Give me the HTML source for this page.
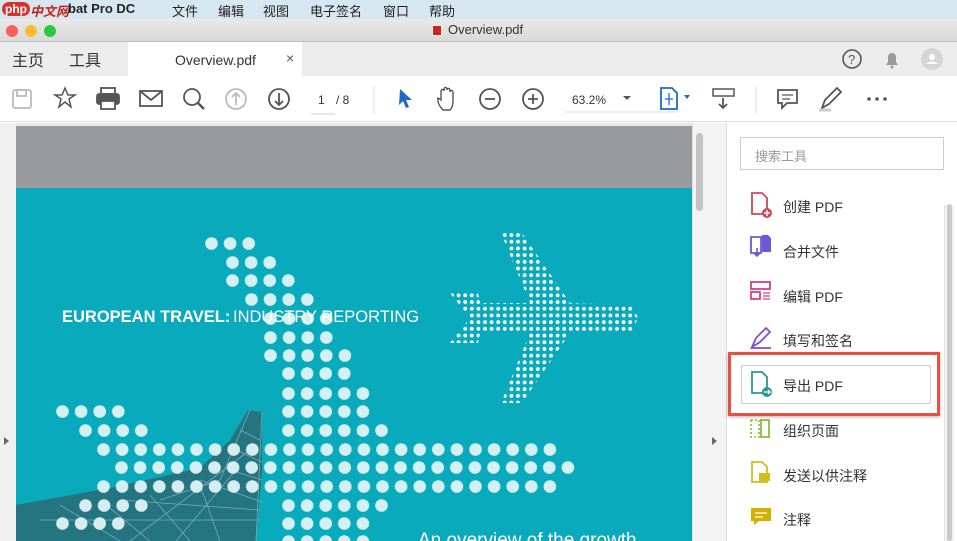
<!DOCTYPE html>
<html><head><meta charset="utf-8"><style>
*{margin:0;padding:0;box-sizing:border-box}
body{width:957px;height:541px;overflow:hidden;position:relative;background:#fff;font-family:"Liberation Sans","Noto Sans CJK SC",sans-serif;color:#333}
.abs{position:absolute}
.menu{top:0;left:0;width:957px;height:19px;background:#d6e7f1;font-size:13px;color:#222}
.menu span{position:absolute;top:1px}
.title{top:19px;left:0;width:957px;height:23px;background:linear-gradient(#e9e9e9,#d9d9d9);border-bottom:1px solid #bdbdbd}
.tl{width:12px;height:12px;border-radius:50%;top:6px}
.tabs{top:42px;left:0;width:957px;height:34px;background:#ececec}
.tool{top:76px;left:0;width:957px;height:46px;background:#fff;border-bottom:1px solid #ddd}
.panel{top:123px;left:726px;width:231px;height:418px;background:#fff;border-left:1px solid #ddd}
.item{position:absolute;left:783px;font-size:14px;color:#333}
</style></head><body>
<div class="abs menu">
<span style="left:2px;font-weight:bold;color:#fff;background:#d9312b;border-radius:8px;padding:0 3px;font-size:12px;top:2px">php</span>
<span style="left:30px;font-weight:bold;font-style:italic;color:#c0241e">中文网</span>
<span style="left:68px;font-weight:bold">bat Pro DC</span>
<span style="left:172px">文件</span><span style="left:218px">编辑</span><span style="left:263px">视图</span><span style="left:310px">电子签名</span><span style="left:383px">窗口</span><span style="left:429px">帮助</span>
</div>
<div class="abs title">
<div class="abs tl" style="left:6px;background:#fc5f57"></div>
<div class="abs tl" style="left:25px;background:#fdbc2e"></div>
<div class="abs tl" style="left:44px;background:#28c840"></div>
<div class="abs" style="left:432px;top:6px;width:10px;height:11px;background:#c7281f;border:1px solid #eee"></div>
<div class="abs" style="left:448px;top:3px;font-size:13px;color:#333">Overview.pdf</div>
</div>
<div class="abs tabs">
<div class="abs" style="left:12px;top:5px;font-size:16px">主页</div>
<div class="abs" style="left:69px;top:5px;font-size:16px">工具</div>
<div class="abs" style="left:128px;top:0;width:174px;height:34px;background:#fff"></div>
<div class="abs" style="left:175px;top:10px;font-size:14px">Overview.pdf</div>
<div class="abs" style="left:286px;top:8px;font-size:14px;color:#555">×</div>
<svg class="abs" style="left:838px;top:5px" width="120" height="26">
<circle cx="14" cy="12" r="9" fill="none" stroke="#555" stroke-width="1.6"/><text x="10" y="17" font-size="13" fill="#555" font-family="Liberation Sans">?</text>
<path d="M48 18h12l-2-3v-5a4 4 0 0 0-8 0v5z" fill="#999"/><circle cx="54" cy="20" r="1.5" fill="#999"/>
<circle cx="94" cy="12" r="11" fill="#d5d5d5"/><circle cx="94" cy="10" r="3" fill="#fff"/><path d="M88 17q6-5 12 0z" fill="#fff"/>
</svg>
</div>
<div class="abs tool">
<svg width="957" height="46" fill="none" stroke="#555" stroke-width="1.8">
<rect x="13" y="14" width="18" height="18" rx="2" stroke="#bbb"/><rect x="17" y="14" width="9" height="6" stroke="#bbb"/>
<path d="M65 12l3 7h7l-6 4 2 8-6-5-6 5 2-8-6-4h7z" stroke-width="1.5"/>
<rect x="97" y="18" width="22" height="10" rx="2" fill="#555"/><rect x="101" y="12" width="14" height="6"/><rect x="101" y="25" width="14" height="8" fill="#fff"/>
<rect x="140" y="15" width="22" height="15"/><path d="M140 15l11 9 11-9"/>
<circle cx="192" cy="21" r="8"/><path d="M198 27l6 6" stroke-width="2.5"/>
<circle cx="236" cy="23" r="10" stroke="#bbb"/><path d="M236 29v-12m-4 4l4-4 4 4" stroke="#bbb"/>
<circle cx="279" cy="23" r="10"/><path d="M279 17v12m-4-4l4 4 4-4"/>
<path d="M311 38h24" stroke="#ccc" stroke-width="1"/>
<path d="M374 10v28" stroke="#ddd" stroke-width="1"/>
<path d="M400 13l12 11h-6l3 7-3 1-3-7-4 4z" fill="#1b6ac9" stroke="none"/>
<path d="M443 34q-6-6-5-12l3 2v-9a1.5 1.5 0 0 1 3 0v-2a1.5 1.5 0 0 1 3 0v1a1.5 1.5 0 0 1 3 0v2a1.5 1.5 0 0 1 3 0v9q0 6-3 9z" stroke-width="1.4"/>
<circle cx="490" cy="23" r="10"/><path d="M485 23h10"/>
<circle cx="533" cy="23" r="10"/><path d="M528 23h10M533 18v10"/>
<path d="M565 36h112" stroke="#ddd" stroke-width="1"/><path d="M623 20l4 4 4-4z" fill="#555" stroke="none"/>
<path d="M661 12h11l5 5v16h-16z" stroke="#1b6ac9"/><path d="M669 17v12m-4-6h8" stroke="#1b6ac9" stroke-width="1.3"/><path d="M684 19l3 4 3-4z" fill="#1b6ac9" stroke="none"/>
<rect x="713" y="13" width="21" height="7" stroke-width="1.5"/><path d="M723 22v10m-4-4l4 4 4-4"/>
<path d="M756 10v28" stroke="#ddd" stroke-width="1"/>
<path d="M778 14h19v13h-10l-5 5v-5h-4z"/><path d="M782 19h11M782 23h8" stroke-width="1.2"/>
<path d="M822 32l3-8 12-12 4 4-12 12z"/><path d="M819 34h12" stroke="#ccc" stroke-width="3"/>
<circle cx="869" cy="23" r="1.8" fill="#555" stroke="none"/><circle cx="877" cy="23" r="1.8" fill="#555" stroke="none"/><circle cx="885" cy="23" r="1.8" fill="#555" stroke="none"/>
</svg>
<div class="abs" style="left:318px;top:17px;font-size:12px">1</div>
<div class="abs" style="left:336px;top:17px;font-size:12px">/ 8</div>
<div class="abs" style="left:572px;top:17px;font-size:12px">63.2%</div>
</div>
<div class="abs" style="left:0;top:123px;width:16px;height:418px;background:#f0f0f0"></div>
<div class="abs" style="left:4px;top:437px;border-left:5px solid #666;border-top:4px solid transparent;border-bottom:4px solid transparent"></div>
<div class="abs" style="left:16px;top:123px;width:676px;height:3px;background:#e6e6e6"></div>
<div class="abs" style="left:16px;top:126px;width:676px;height:62px;background:#9a9b9d"></div>
<div class="abs" style="left:16px;top:188px;width:676px;height:353px;background:#0aaabd"></div>
<svg class="abs" style="left:0;top:0" width="692" height="541">
<defs>
<pattern id="p" width="18.6" height="20" patternUnits="userSpaceOnUse"><circle cx="6.5" cy="6.5" r="6.3" fill="#dff4f6"/></pattern>
<pattern id="q" width="6.6" height="6.7" patternUnits="userSpaceOnUse"><circle cx="2" cy="2" r="1.9" fill="#fff"/></pattern>
</defs>
<g fill="#2a6870" opacity="0.8">
<polygon points="16,505 110,488 200,468 230,440 248,410 262,412 262,470 256,541 16,541"/>
</g>
<g stroke="#9cc4c8" stroke-width="0.8" fill="none" opacity="0.7">
<path d="M250 410l-30 70-60 20M262 412l-6 129M240 430l20 10M236 450l26 12M230 470l32 10M200 480l62 22M120 500l140 10M40 520l220 0M60 505l60 36M100 500l50 41M150 495l40 46M200 485l20 56M236 470l-60 71M250 450l-120 91"/>
</g>
<g opacity="0.95">
<g transform="translate(205,237)"><rect width="50.2" height="13" fill="url(#p)"/></g>
<g transform="translate(226,256)"><rect width="50.2" height="13" fill="url(#p)"/></g>
<g transform="translate(226,274)"><rect width="68.8" height="13" fill="url(#p)"/></g>
<g transform="translate(245,293)"><rect width="68.8" height="13" fill="url(#p)"/></g>
<g transform="translate(264,312)"><rect width="68.8" height="13" fill="url(#p)"/></g>
<g transform="translate(264,331)"><rect width="68.8" height="13" fill="url(#p)"/></g>
<g transform="translate(264,349)"><rect width="87.4" height="13" fill="url(#p)"/></g>
<g transform="translate(282,367)"><rect width="68.8" height="13" fill="url(#p)"/></g>
<g transform="translate(282,387)"><rect width="87.4" height="13" fill="url(#p)"/></g>
<g transform="translate(282,405)"><rect width="87.4" height="13" fill="url(#p)"/></g>
<g transform="translate(56,405)"><rect width="68.8" height="13" fill="url(#p)"/></g>
<g transform="translate(282,424)"><rect width="106" height="13" fill="url(#p)"/></g>
<g transform="translate(79,424)"><rect width="68.8" height="13" fill="url(#p)"/></g>
<g transform="translate(97,443)"><rect width="459.4" height="13" fill="url(#p)"/></g>
<g transform="translate(115,461)"><rect width="459.4" height="13" fill="url(#p)"/></g>
<g transform="translate(97,480)"><rect width="459.4" height="13" fill="url(#p)"/></g>
<g transform="translate(282,499)"><rect width="106" height="13" fill="url(#p)"/></g>
<g transform="translate(79,499)"><rect width="68.8" height="13" fill="url(#p)"/></g>
<g transform="translate(282,517)"><rect width="87.4" height="13" fill="url(#p)"/></g>
<g transform="translate(56,517)"><rect width="68.8" height="13" fill="url(#p)"/></g>
<g transform="translate(282,535)"><rect width="87.4" height="13" fill="url(#p)"/></g>
</g>
<g transform="translate(450,233)"><polygon points="51,0 72,0 120,70 182,72 188,85 182,98 120,100 72,170 51,170 80,100 30,100 28,110 0,110 20,85 0,60 28,60 30,70 80,70" fill="url(#q)"/></g>
<text x="62" y="322" font-family="Liberation Sans" font-weight="bold" font-size="16.5" fill="#fff">EUROPEAN TRAVEL:</text>
<text x="233" y="322" font-family="Liberation Sans" font-size="16.5" fill="#fff">INDUSTRY REPORTING</text>
<text x="418" y="546" font-family="Liberation Sans" font-size="19" fill="#fff">An overview of the growth</text>
</svg>
<div class="abs" style="left:692px;top:123px;width:34px;height:418px;background:#f3f3f3;border-left:1px solid #ddd"></div>
<div class="abs" style="left:696px;top:133px;width:7px;height:78px;background:#c4c4c4;border-radius:4px"></div>
<div class="abs" style="left:712px;top:437px;border-left:5px solid #666;border-top:4px solid transparent;border-bottom:4px solid transparent"></div>
<div class="abs panel"></div>
<div class="abs" style="left:740px;top:137px;width:204px;height:33px;border:1px solid #ccc;font-size:13px;color:#999;padding:8px 14px">搜索工具</div>
<div class="abs" style="left:944px;top:205px;width:10px;height:336px;background:#f2f2f2;border-left:1px solid #e4e4e4"></div>
<div class="abs" style="left:947px;top:204px;width:5px;height:337px;background:#c9c9c9;border-radius:3px"></div>
<div class="abs" style="left:728px;top:352px;width:212px;height:64px;border:3px solid #e8503f;box-shadow:0 1px 3px rgba(0,0,0,.3)"></div>
<div class="abs" style="left:741px;top:365px;width:190px;height:39px;border:1px solid #ccc;border-radius:2px;background:#fff"></div>
<svg class="abs" style="left:748px;top:190px" width="30" height="350">
<path d="M4 3h10l5 5v16h-15z" fill="#fff" stroke="#d4455a" stroke-width="1.8"/><circle cx="19" cy="23" r="5" fill="#d4455a"/><path d="M16 23h6M19 20v6" stroke="#fff" stroke-width="1.5"/>
<path d="M3 47h10v16h-10z" fill="#fff" stroke="#6a5ad8" stroke-width="1.8"/><path d="M14 45h6l3 3v14h-9z" fill="#6a5ad8"/><path d="M9 58v8m-3-3l3 3 3-3" stroke="#6a5ad8" stroke-width="1.6" fill="none"/>
<rect x="3" y="92" width="19" height="7" fill="none" stroke="#d43f8a" stroke-width="1.8"/><rect x="3" y="102" width="9" height="7" fill="none" stroke="#d43f8a" stroke-width="1.8"/><path d="M15 103h7M15 106h7M15 109h7" stroke="#d43f8a" stroke-width="1.2"/>
<path d="M4 157l4-9 10-10 4 4-10 10zM3 158h20" fill="none" stroke="#7d4fd8" stroke-width="1.8"/>
<path d="M4 182h10l5 5v16h-15z" fill="#fff" stroke="#2a9a8a" stroke-width="1.8"/><circle cx="19" cy="202" r="5" fill="#2a9a8a"/><path d="M16 202h6l-2-2m2 2l-2 2" stroke="#fff" stroke-width="1.3" fill="none"/>
<path d="M3 230h8v17h-8z" fill="none" stroke="#8cbb3a" stroke-width="1.6" stroke-dasharray="2 2"/><rect x="13" y="230" width="8" height="17" fill="none" stroke="#8cbb3a" stroke-width="1.8"/>
<path d="M4 272h10l5 5v15h-15z" fill="#fff" stroke="#d1be1a" stroke-width="1.8"/><rect x="11" y="283" width="11" height="8" fill="#d1be1a"/>
<path d="M3 318h20v13h-12l-5 4v-4h-3z" fill="#d1b000"/><path d="M7 323h12M7 327h8" stroke="#fff" stroke-width="1.3"/>
</svg>
<div class="item" style="top:197px">创建 PDF</div>
<div class="item" style="top:242px">合并文件</div>
<div class="item" style="top:287px">编辑 PDF</div>
<div class="item" style="top:331px">填写和签名</div>
<div class="item" style="top:376px">导出 PDF</div>
<div class="item" style="top:421px">组织页面</div>
<div class="item" style="top:466px">发送以供注释</div>
<div class="item" style="top:510px">注释</div>
</body></html>
